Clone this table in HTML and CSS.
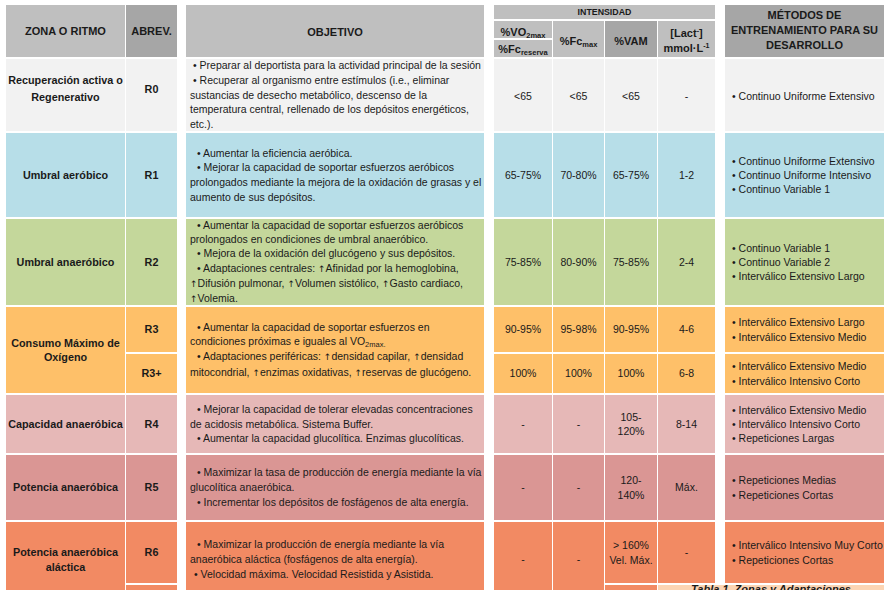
FILE: index.html
```html
<!DOCTYPE html>
<html lang="es">
<head>
<meta charset="utf-8">
<title>Zonas y Adaptaciones</title>
<link rel="stylesheet" href="styles.css">
</head>
<body>
<div class="sheet">
  <div class="table">
    <div class="sp sp-a"></div>
    <div class="sp sp-b"></div>
    <div class="sp sp-c"></div>

    <!-- header -->
    <div class="c hl h rs3"><span>ZONA O RITMO</span></div>
    <div class="c hd h rs3"><span>ABREV.</span></div>
    <div class="c hl h rs3 obj-h"><span>OBJETIVO</span></div>
    <div class="c hl h small cs4"><span>INTENSIDAD</span></div>
    <div class="c hd h rs3 met-h"><span>MÉTODOS DE<br>ENTRENAMIENTO PARA SU<br>DESARROLLO</span></div>
    <div class="c hl h low"><span>%VO<span class="sub">2max</span></span></div>
    <div class="c hl h rs2 low"><span>%Fc<span class="sub">max</span></span></div>
    <div class="c hd h rs2 low"><span>%VAM</span></div>
    <div class="c hl h rs2 lact"><span>[Lact<span class="sup">-</span>]<br>mmol·L<span class="sup">-1</span></span></div>
    <div class="c hl h"><span>%Fc<span class="sub">reserva</span></span></div>

    <!-- R0 -->
    <div class="c r0 z z17 up"><span>Recuperación activa o<br>Regenerativo</span></div>
    <div class="c r0 z up"><span>R0</span></div>
    <div class="c r0 obj"><div class="lines">
      <div class="b0">• Preparar al deportista para la actividad principal de la sesión</div>
      <div class="b0">• Recuperar al organismo entre estímulos (i.e., eliminar</div>
      <div>sustancias de desecho metabólico, descenso de la</div>
      <div>temperatura central, rellenado de los depósitos energéticos,</div>
      <div>etc.).</div>
    </div></div>
    <div class="c r0 v down"><span>&lt;65</span></div>
    <div class="c r0 v down"><span>&lt;65</span></div>
    <div class="c r0 v down"><span>&lt;65</span></div>
    <div class="c r0 v down"><span>-</span></div>
    <div class="c r0 met down"><div class="lines"><div>• Continuo Uniforme Extensivo</div></div></div>

    <!-- R1 -->
    <div class="c r1 z"><span>Umbral aeróbico</span></div>
    <div class="c r1 z"><span>R1</span></div>
    <div class="c r1 obj"><div class="lines">
      <div class="b">• Aumentar la eficiencia aeróbica.</div>
      <div class="b">• Mejorar la capacidad de soportar esfuerzos aeróbicos</div>
      <div>prolongados mediante la mejora de la oxidación de grasas y el</div>
      <div>aumento de sus depósitos.</div>
    </div></div>
    <div class="c r1 v"><span>65-75%</span></div>
    <div class="c r1 v"><span>70-80%</span></div>
    <div class="c r1 v"><span>65-75%</span></div>
    <div class="c r1 v"><span>1-2</span></div>
    <div class="c r1 met"><div class="lines">
      <div>• Continuo Uniforme Extensivo</div>
      <div>• Continuo Uniforme Intensivo</div>
      <div>• Continuo Variable 1</div>
    </div></div>

    <!-- R2 -->
    <div class="c r2 z"><span>Umbral anaeróbico</span></div>
    <div class="c r2 z"><span>R2</span></div>
    <div class="c r2 obj"><div class="lines tight">
      <div class="b">• Aumentar la capacidad de soportar esfuerzos aeróbicos</div>
      <div>prolongados en condiciones de umbral anaeróbico.</div>
      <div class="b">• Mejora de la oxidación del glucógeno y sus depósitos.</div>
      <div class="b">• Adaptaciones centrales: <span class="ar">↑</span>Afinidad por la hemoglobina,</div>
      <div><span class="ar">↑</span>Difusión pulmonar, <span class="ar">↑</span>Volumen sistólico, <span class="ar">↑</span>Gasto cardiaco,</div>
      <div><span class="ar">↑</span>Volemia.</div>
    </div></div>
    <div class="c r2 v"><span>75-85%</span></div>
    <div class="c r2 v"><span>80-90%</span></div>
    <div class="c r2 v"><span>75-85%</span></div>
    <div class="c r2 v"><span>2-4</span></div>
    <div class="c r2 met"><div class="lines">
      <div>• Continuo Variable 1</div>
      <div>• Continuo Variable 2</div>
      <div>• Interválico Extensivo Largo</div>
    </div></div>

    <!-- R3 / R3+ -->
    <div class="c r3 z rs2"><span>Consumo Máximo de<br>Oxígeno</span></div>
    <div class="c r3 z"><span>R3</span></div>
    <div class="c r3 obj rs2"><div class="lines">
      <div class="b">• Aumentar la capacidad de soportar esfuerzos en</div>
      <div>condiciones próximas e iguales al VO<span class="sub">2max.</span></div>
      <div class="b">• Adaptaciones periféricas: <span class="ar">↑</span>densidad capilar, <span class="ar">↑</span>densidad</div>
      <div>mitocondrial, <span class="ar">↑</span>enzimas oxidativas, <span class="ar">↑</span>reservas de glucógeno.</div>
    </div></div>
    <div class="c r3 v"><span>90-95%</span></div>
    <div class="c r3 v"><span>95-98%</span></div>
    <div class="c r3 v"><span>90-95%</span></div>
    <div class="c r3 v"><span>4-6</span></div>
    <div class="c r3 met"><div class="lines">
      <div>• Interválico Extensivo Largo</div>
      <div>• Interválico Extensivo Medio</div>
    </div></div>
    <div class="c r3 z"><span>R3+</span></div>
    <div class="c r3 v"><span>100%</span></div>
    <div class="c r3 v"><span>100%</span></div>
    <div class="c r3 v"><span>100%</span></div>
    <div class="c r3 v"><span>6-8</span></div>
    <div class="c r3 met"><div class="lines">
      <div>• Interválico Extensivo Medio</div>
      <div>• Interválico Intensivo Corto</div>
    </div></div>

    <!-- R4 -->
    <div class="c r4 z"><span>Capacidad anaeróbica</span></div>
    <div class="c r4 z"><span>R4</span></div>
    <div class="c r4 obj"><div class="lines">
      <div class="b">• Mejorar la capacidad de tolerar elevadas concentraciones</div>
      <div>de acidosis metabólica. Sistema Buffer.</div>
      <div class="b">• Aumentar la capacidad glucolítica. Enzimas glucolíticas.</div>
    </div></div>
    <div class="c r4 v"><span>-</span></div>
    <div class="c r4 v"><span>-</span></div>
    <div class="c r4 v"><span>105-<br>120%</span></div>
    <div class="c r4 v"><span>8-14</span></div>
    <div class="c r4 met"><div class="lines">
      <div>• Interválico Extensivo Medio</div>
      <div>• Interválico Intensivo Corto</div>
      <div>• Repeticiones Largas</div>
    </div></div>

    <!-- R5 -->
    <div class="c r5 z"><span>Potencia anaeróbica</span></div>
    <div class="c r5 z"><span>R5</span></div>
    <div class="c r5 obj"><div class="lines">
      <div class="b">• Maximizar la tasa de producción de energía mediante la vía</div>
      <div>glucolítica anaeróbica.</div>
      <div class="b">• Incrementar los depósitos de fosfágenos de alta energía.</div>
    </div></div>
    <div class="c r5 v"><span>-</span></div>
    <div class="c r5 v"><span>-</span></div>
    <div class="c r5 v"><span>120-<br>140%</span></div>
    <div class="c r5 v"><span>Máx.</span></div>
    <div class="c r5 met"><div class="lines">
      <div>• Repeticiones Medias</div>
      <div>• Repeticiones Cortas</div>
    </div></div>

    <!-- R6 -->
    <div class="c r6 z rs2"><span>Potencia anaeróbica<br>aláctica</span></div>
    <div class="c r6 z"><span>R6</span></div>
    <div class="c r6 obj rs2"><div class="lines">
      <div class="b">• Maximizar la producción de energía mediante la vía</div>
      <div>anaeróbica aláctica (fosfágenos de alta energía).</div>
      <div class="b1">• Velocidad máxima. Velocidad Resistida y Asistida.</div>
    </div></div>
    <div class="c r6 v rs2"><span>-</span></div>
    <div class="c r6 v rs2"><span>-</span></div>
    <div class="c r6 v"><span>&gt; 160%<br>Vel. Máx.</span></div>
    <div class="c r6 v"><span>-</span></div>
    <div class="c r6 met"><div class="lines">
      <div>• Interválico Intensivo Muy Corto</div>
      <div>• Repeticiones Cortas</div>
    </div></div>
    <div class="c r6 z"></div>
    <div class="c r6 v"></div>
    <div class="cap cs3"><span>Tabla 1. Zonas y Adaptaciones</span></div>
  </div>
</div>
</body>
</html>
```
FILE: styles.css
```css
html, body {
  margin: 0;
  padding: 0;
  background: #ffffff;
}

body {
  width: 886px;
  height: 590px;
  overflow: hidden;
  font-family: "Liberation Sans", Arial, sans-serif;
  font-size: 10.5px;
  color: #1a1a1a;
}

.sheet {
  padding: 5px 0 0 6px;
}

.table {
  display: grid;
  grid-template-columns: 119px 51px 7px 298px 8px 58px 51px 52px 57px 8px 159px;
  grid-template-rows: 14px 17px 17px 72px 84px 86px 45px 39px 58px 65px 61px 12px;
  column-gap: 1px;
  row-gap: 2px;
}

.sp { background: #ffffff; }
.sp-a { grid-column: 3; grid-row: 1 / -1; }
.sp-b { grid-column: 5; grid-row: 1 / -1; }
.sp-c { grid-column: 10; grid-row: 1 / 12; }

.rs2 { grid-row: span 2; }
.rs3 { grid-row: span 3; }
.cs3 { grid-column: span 3; }
.cs4 { grid-column: span 4; }

.c {
  display: flex;
  align-items: center;
  justify-content: center;
  text-align: center;
  line-height: 14px;
  overflow: hidden;
}

.h { font-weight: bold; font-size: 11px; color: #1a1a1a; }
.hl { background: #bfbfbf; }
.hd { background: #a6a6a6; }
.small { font-size: 8.8px; }
.obj-h { padding-top: 2px; }
.met-h { line-height: 15px; padding-bottom: 2px; }
.low { padding-top: 4px; }
.lact { line-height: 15px; padding-top: 3px; }

.sub { font-size: 7.5px; vertical-align: -2px; line-height: 0; }
.sup { font-size: 7px; vertical-align: 4px; line-height: 0; }

.z { font-weight: bold; font-size: 10.8px; line-height: 14.5px; }
.z17 { line-height: 17px; }
.up { padding-bottom: 12px; }
.down { padding-top: 3px; }
.v { font-size: 10.5px; line-height: 14.5px; }

.obj {
  justify-content: flex-start;
  text-align: left;
  padding-left: 4px;
}

.met {
  justify-content: flex-start;
  text-align: left;
  padding-left: 7px;
}

.lines > div { white-space: nowrap; line-height: 14.7px; }
.lines.tight > div { line-height: 14.2px; }
.met .lines > div { line-height: 14.3px; }
.lines .b0 { padding-left: 3px; }
.lines .b { padding-left: 7px; }
.lines .b1 { padding-left: 4px; }
.ar { font-family: "DejaVu Sans", sans-serif; font-size: 9px; }

.r0 { background: #f2f2f2; }
.r1 { background: #b7dee8; }
.r2 { background: #c4d79b; }
.r3 { background: #fec069; }
.r4 { background: #e6b8b7; }
.r5 { background: #da9694; }
.r6 { background: #f28a63; }

.cap {
  display: flex;
  justify-content: center;
  background: #fcd5b4;
  font-weight: bold;
  font-style: italic;
  font-size: 11px;
  line-height: 9px;
}
```
